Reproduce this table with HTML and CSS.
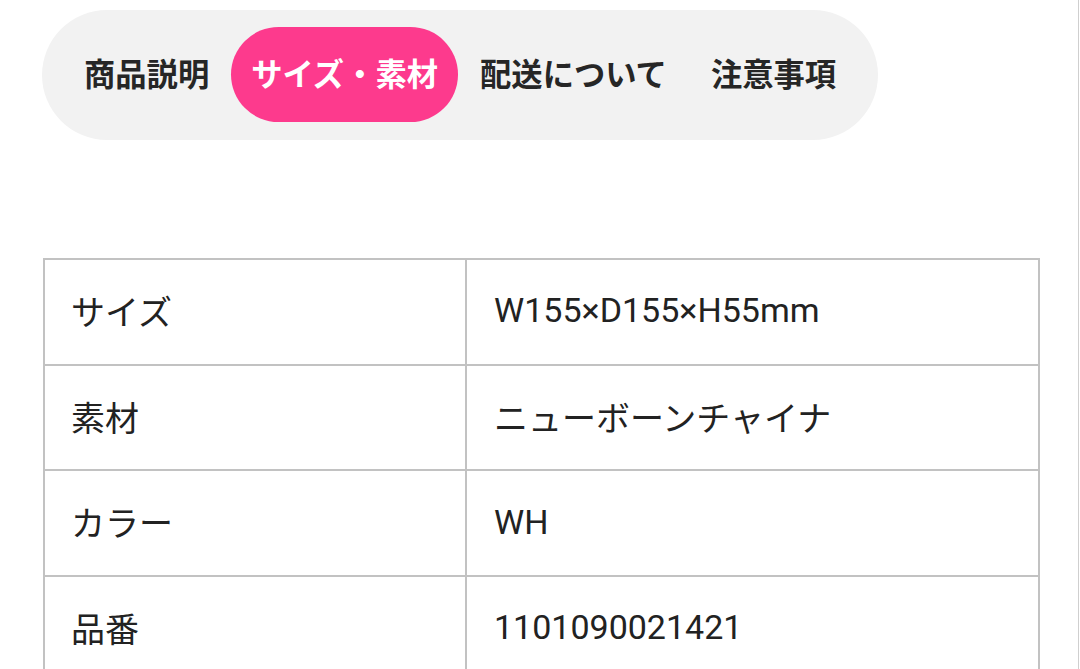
FILE: index.html
```html
<!DOCTYPE html>
<html lang="ja">
<head>
<meta charset="utf-8">
<link rel="stylesheet" href="styles.css">
</head>
<body>
<div class="page">
  <nav class="tabs">
    <span class="tab">商品説明</span>
    <span class="tab active">サイズ・素材</span>
    <span class="tab">配送について</span>
    <span class="tab">注意事項</span>
  </nav>
  <table class="spec">
    <tr><td class="key">サイズ</td><td class="val">W155×D155×H55mm</td></tr>
    <tr><td class="key">素材</td><td class="val">ニューボーンチャイナ</td></tr>
    <tr><td class="key">カラー</td><td class="val">WH</td></tr>
    <tr><td class="key">品番</td><td class="val">1101090021421</td></tr>
  </table>
</div>
</body>
</html>
```

FILE: styles.css
```css
html, body {
  margin: 0;
  padding: 0;
  background: #ffffff;
}
body {
  font-family: Roboto, "Noto Sans CJK JP", sans-serif;
  color: #222222;
  overflow: hidden;
}
.page {
  width: 1079px;
  height: 669px;
  border-right: 1px solid #cfcfcf;
  padding: 10px 0 0 42px;
  box-sizing: border-box;
}
.tabs {
  display: inline-flex;
  align-items: center;
  background: #f2f2f2;
  border-radius: 65px;
  padding: 17px 20px 18px 20px;
  height: 130px;
  box-sizing: border-box;
}
.tab {
  font-family: "Noto Sans CJK JP", sans-serif;
  font-weight: 700;
  font-size: 31.3px;
  line-height: 91px;
  height: 95px;
  box-sizing: border-box;
  padding: 0 22px 4px;
  border-radius: 48px;
  color: #262626;
  white-space: nowrap;
}
.tab.active {
  padding: 0 20px 4px;
  background: #fd3a8d;
  color: #ffffff;
}
.spec {
  margin-top: 118px;
  border-collapse: collapse;
  width: 997px;
  margin-left: 1px;
}
.spec td {
  border: 2px solid #c2c2c2;
  height: 105.7px;
  padding: 0 0 3px 27px;
  font-size: 34px;
  vertical-align: middle;
  box-sizing: border-box;
}
.spec .key {
  width: 422px;
  font-family: "Noto Sans CJK JP", sans-serif;
  padding-left: 26px;
}
.spec .val {
  font-family: Roboto, "Noto Sans CJK JP", sans-serif;
}
```
